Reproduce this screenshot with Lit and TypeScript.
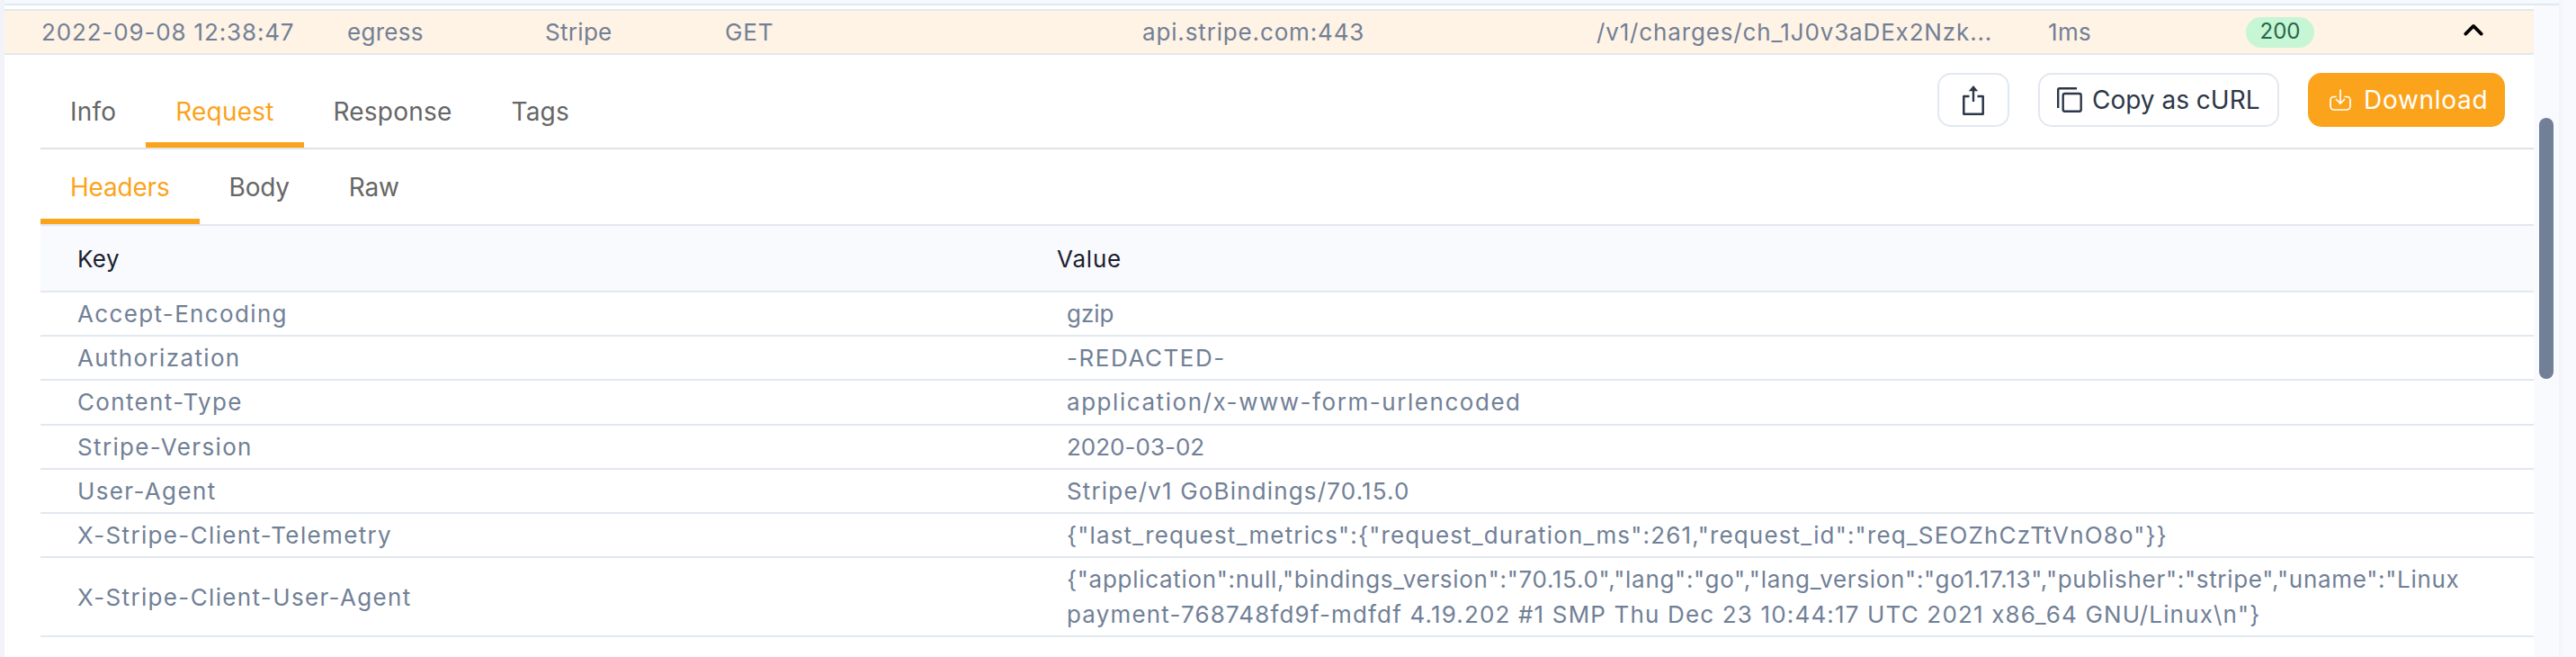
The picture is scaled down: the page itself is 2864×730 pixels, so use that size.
import { LitElement, html, css, svg } from "lit";
import { customElement } from "lit/decorators.js";

// [key, value, spacing class] - the spacing classes bring the text widths close to the original face
const HEADERS: [string, unknown, string][] = [
  ["Accept-Encoding", "gzip", ""],
  ["Authorization", "-REDACTED-", "wide"],
  ["Content-Type", "application/x-www-form-urlencoded", "wide"],
  ["Stripe-Version", "2020-03-02", ""],
  ["User-Agent", "Stripe/v1 GoBindings/70.15.0", "mid"],
  ["X-Stripe-Client-Telemetry", '{"last_request_metrics":{"request_duration_ms":261,"request_id":"req_SEOZhCzTtVnO8o"}}', "mid"],
  [
    "X-Stripe-Client-User-Agent",
    html`<span class="tight">{"application":null,"bindings_version":"70.15.0","lang":"go","lang_version":"go1.17.13","publisher":"stripe","uname":"Linux</span><br /><span class="mid">payment-768748fd9f-mdfdf 4.19.202 #1 SMP Thu Dec 23 10:44:17 UTC 2021 x86_64 GNU/Linux\\n"}</span>`,
    "",
  ],
];

const shareIcon = svg`
  <path d="M12 0 17.200 6.200H13.200V18H10.800V6.200H6.800Z" fill="currentColor"/>
  <path d="M7.500 12H1.300V31.700H22.700V12H16.500" fill="none" stroke="currentColor" stroke-width="2.500" stroke-linejoin="round"/>`;
const copyIcon = svg`
  <path d="M1.200 23V2.400A1.200 1.200 0 0 1 2.400 1.200H22" fill="none" stroke="currentColor" stroke-width="2.400"/>
  <rect x="6.700" y="7" width="20" height="19.800" rx="2" fill="none" stroke="currentColor" stroke-width="2.400"/>`;
const downloadIcon = svg`
  <path d="M12 .5v15M7 11l5 5 5-5" fill="none" stroke="currentColor" stroke-width="1.700"/>
  <path d="M7.500 8.500H4.500A3.500 3.500 0 0 0 1 12v7a4 4 0 0 0 4 4h14a4 4 0 0 0 4-4v-7a3.500 3.500 0 0 0-3.500-3.500h-3" fill="none" stroke="currentColor" stroke-width="1.700"/>`;

@customElement("app-root")
export class AppRoot extends LitElement {
  static styles = css`
    :host {
      display: block;
      width: 2864px;
      height: 730px;
      overflow: hidden;
      background: #f8f9fd;
      font-family: Inter, "Open Sans", sans-serif;
      font-size: 26px;
      font-feature-settings: "calt" 0;
      color: #718096;
    }

    .page {
      display: flex;
      height: 730px;
    }

    .left-gap {
      width: 5px;
      flex: none;
      background: #f1f3f8;
    }

    .content {
      width: 2840px;
      flex: none;
      box-shadow: 2px 0 4px rgba(113, 128, 150, 0.06);
    }

    .top-strip {
      height: 4px;
      background: #f6f9fd;
      border-bottom: 2px solid #e2e8f0;
    }

    .body {
      display: flex;
      height: 724px;
    }

    .main {
      width: 2812px;
      flex: none;
      padding-top: 4px;
      background: #fff;
    }

    .log-row {
      display: grid;
      grid-template-columns: 340px 220px 200px 464px 505px 502px 220px 242px 1fr;
      align-items: center;
      height: 47px;
      padding-left: 41px;
      background: #fff3e5;
      border-top: 2px solid #e2e8f0;
      border-bottom: 2px solid #e2e8f0;
      white-space: nowrap;
      letter-spacing: 0.85px;
    }

    .plain {
      letter-spacing: 0.3px;
    }

    .badge {
      display: inline-block;
      width: 76px;
      height: 34px;
      line-height: 32px;
      border-radius: 17px;
      background: #c6f6d5;
      color: #276749;
      font-size: 24px;
      letter-spacing: 0;
      text-align: center;
    }

    .chevron {
      display: block;
      width: 22px;
      height: 14px;
      margin-bottom: 5px;
      color: #000;
    }

    .tab-bar {
      display: flex;
      align-items: flex-start;
      justify-content: space-between;
      height: 103px;
      margin-left: 40px;
      border-bottom: 2px solid #e2e2e2;
    }

    .tabs {
      display: flex;
      height: 100%;
    }

    .tab {
      display: flex;
      align-items: center;
      padding: 6px 33px 0;
      height: 100%;
      box-sizing: border-box;
      color: #666;
      font-size: 28px;
      letter-spacing: 0.2px;
      border-bottom: 6px solid transparent;
    }

    .tabs .tab {
      padding-top: 28px;
    }

    .tab.active {
      color: #fca31c;
      border-bottom-color: #fca31c;
    }

    .actions {
      display: flex;
      gap: 32px;
      margin-top: 20px;
      margin-right: 32px;
    }

    .btn {
      display: flex;
      align-items: center;
      box-sizing: border-box;
      height: 60px;
      border: 2px solid #e2e8f0;
      border-radius: 15px;
      background: #fff;
      color: #2d3748;
      font-size: 28px;
    }

    .btn svg {
      display: block;
      flex: none;
    }

    .btn.share {
      width: 80px;
      justify-content: center;
    }

    .btn.copy {
      width: 268px;
      padding-left: 19px;
      gap: 11px;
    }

    .btn.download {
      width: 219px;
      padding-left: 24px;
      gap: 14px;
      border: none;
      background: #fca31c;
      color: #fff;
      letter-spacing: 0.7px;
    }

    .sub-tabs {
      display: flex;
      height: 83px;
      margin-left: 40px;
      border-bottom: 2px solid #e2e8f0;
    }

    .sub-tabs .tab {
      letter-spacing: -0.2px;
    }

    .table {
      margin-left: 40px;
    }

    .table-row {
      display: flex;
      align-items: center;
      box-sizing: border-box;
      min-height: 49.2px;
      border-bottom: 2px solid #e2e8f0;
    }

    .table-row.head {
      height: 74px;
      background: #f9fafe;
      color: #1a202c;
      letter-spacing: 0.8px;
    }

    .key {
      width: 1089px;
      flex: none;
      padding-left: 41px;
      letter-spacing: 1.35px;
    }

    .head .key {
      letter-spacing: 0.4px;
    }

    .value {
      flex: 1;
      padding: 4px 0 4px 11px;
      line-height: 39px;
      white-space: nowrap;
    }

    .head .value {
      padding-left: 0;
    }

    .wide {
      letter-spacing: 1.55px;
    }

    .mid {
      letter-spacing: 1.16px;
    }

    .tight {
      letter-spacing: 0.7px;
    }

    .gutter {
      width: 28px;
      flex: none;
      box-sizing: border-box;
      padding: 125px 6px 0;
      background: #f9fafe;
    }

    .thumb {
      height: 290px;
      border-radius: 8px;
      background: #718096;
    }
  `;

  render() {
    return html`
      <div class="page">
        <div class="left-gap"></div>
        <div class="content">
          <div class="top-strip"></div>
          <div class="body">
            <div class="main">
              <div class="log-row">
                <span>2022-09-08 12:38:47</span>
                <span class="plain">egress</span>
                <span class="plain">Stripe</span>
                <span>GET</span>
                <span>api.stripe.com:443</span>
                <span>/v1/charges/ch_1J0v3aDEx2Nzk...</span>
                <span class="plain">1ms</span>
                <span><span class="badge">200</span></span>
                <svg class="chevron" viewBox="0 0 24 15">
                  <path d="M2.500 12.500 12 3l9.500 9.500" fill="none" stroke="currentColor" stroke-width="4" stroke-linecap="round" stroke-linejoin="round" />
                </svg>
              </div>
              <div class="tab-bar">
                <div class="tabs">
                  <div class="tab">Info</div>
                  <div class="tab active">Request</div>
                  <div class="tab">Response</div>
                  <div class="tab">Tags</div>
                </div>
                <div class="actions">
                  <div class="btn share"><svg width="24" height="33" viewBox="0 0 24 33">${shareIcon}</svg></div>
                  <div class="btn copy"><svg width="28" height="28" viewBox="0 0 28 28">${copyIcon}</svg>Copy as cURL</div>
                  <div class="btn download"><svg width="24" height="24" viewBox="0 0 24 24">${downloadIcon}</svg>Download</div>
                </div>
              </div>
              <div class="sub-tabs">
                <div class="tab active">Headers</div>
                <div class="tab">Body</div>
                <div class="tab">Raw</div>
              </div>
              <div class="table">
                <div class="table-row head">
                  <div class="key">Key</div>
                  <div class="value">Value</div>
                </div>
                ${HEADERS.map(
                  ([key, value, fit]) => html`
                    <div class="table-row">
                      <div class="key">${key}</div>
                      <div class="value ${fit}">${value}</div>
                    </div>
                  `,
                )}
              </div>
            </div>
            <div class="gutter"><div class="thumb"></div></div>
          </div>
        </div>
      </div>
    `;
  }
}
